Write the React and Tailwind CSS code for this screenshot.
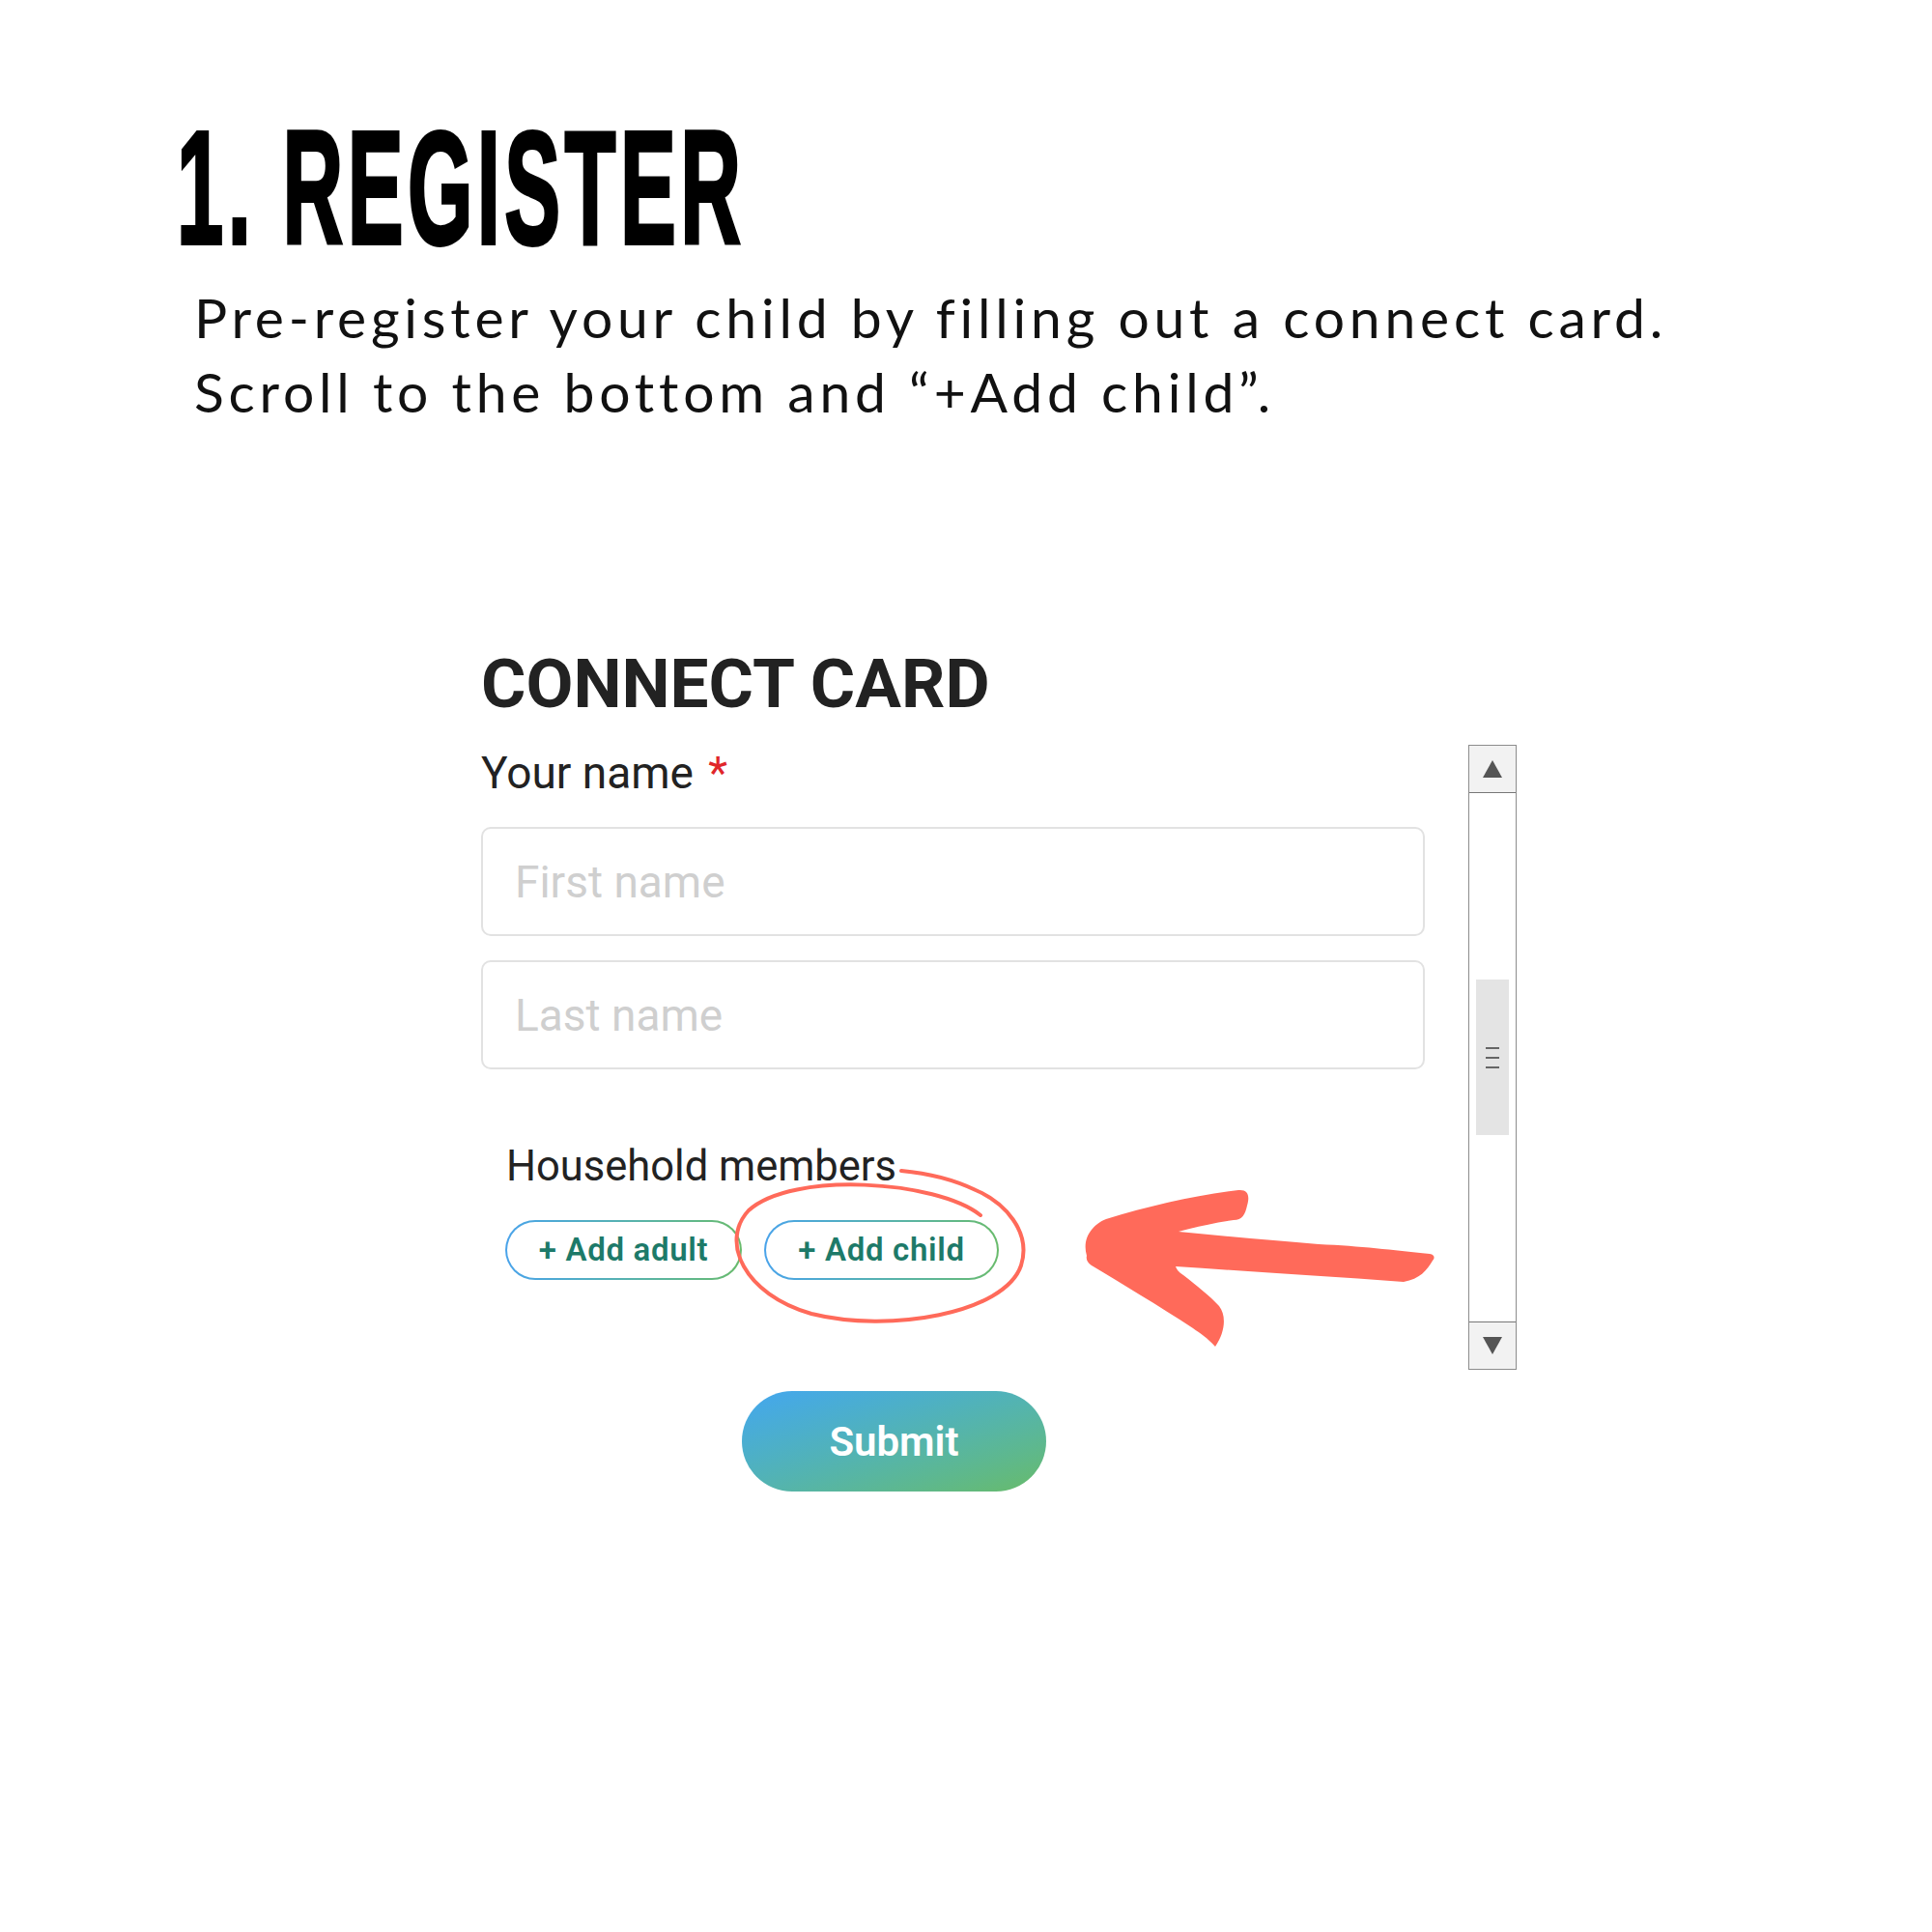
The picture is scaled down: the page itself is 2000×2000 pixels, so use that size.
import React from 'react';

const roboto = "font-['Roboto',sans-serif]";

// hand-drawn coral arrow pointing at the "+ Add child" button
const Arrow = () => (
  <svg className="absolute left-[1100px] top-[1210px] w-[400px] h-[200px]" viewBox="0 0 400 200">
    <path
      d="M25 90 C22 80 24 70 30 63 C34 58 38 55 45 52 C90 38 140 27 182 22 C192 21 194 28 191 38 C189 47 186 53 177 53 C155 56 135 61 120 65 C170 70 220 74 265 78 C310 80 340 84 380 88 C386 89 385 93 383 95 C377 105 370 114 353 117 C270 111 190 106 117 101 C118 104 120 107 125 110 C140 122 152 131 162 142 C170 152 168 170 158 184 C150 175 142 170 135 165 C100 142 60 118 30 100 C26 97 24 94 25 90 Z"
      fill="#ff6a5a"
    />
  </svg>
);

// scribbled loop around the child button
const Loop = () => (
  <svg className="absolute left-[740px] top-[1195px] w-[340px] h-[190px]" viewBox="740 1195 340 190">
    <path
      d="M1015 1258 C970 1222 820 1212 775 1253 C745 1285 770 1340 840 1360 C920 1380 1040 1360 1057 1310 C1068 1275 1040 1245 1010 1232 C985 1220 955 1214 933 1212"
      fill="none"
      stroke="#ff6a5a"
      strokeWidth="4"
      strokeLinecap="round"
    />
  </svg>
);

const GhostButton = ({ label, width }) => (
  <div className={`p-[2px] rounded-full bg-linear-to-r from-[#4aa3ea] to-[#69bb6b] ${width}`}>
    <div className={`h-[58px] rounded-full bg-white flex items-center justify-center text-[33px] font-semibold tracking-[0.02em] text-[#1d7a69] ${roboto}`}>
      {label}
    </div>
  </div>
);

const FakeScrollbar = () => (
  <div className="ml-[45px] w-[50px] h-[647px] border border-[#8c8c8c] flex flex-col bg-white">
    <div className="h-[49px] bg-[#f2f2f2] border-b border-[#777] flex items-center justify-center">
      <div className="w-0 h-0 border-l-[10px] border-r-[10px] border-b-[18px] border-l-transparent border-r-transparent border-b-[#555]" />
    </div>
    <div className="flex-1 pt-[193px] px-[7px]">
      <div className="h-[161px] bg-[#e4e4e4] flex flex-col items-center justify-center gap-[8px]">
        <div className="w-[14px] h-[2px] bg-[#666]" />
        <div className="w-[14px] h-[2px] bg-[#666]" />
        <div className="w-[14px] h-[2px] bg-[#666]" />
      </div>
    </div>
    <div className="h-[49px] bg-[#f2f2f2] border-t border-[#777] flex items-center justify-center">
      <div className="w-0 h-0 border-l-[10px] border-r-[10px] border-t-[18px] border-l-transparent border-r-transparent border-t-[#555]" />
    </div>
  </div>
);

export default function App() {
  return (
    <div className="relative w-[2000px] h-[2000px] bg-white overflow-hidden">
      {/* Header */}
      <div className="pl-[183px] pt-[111px]">
        <h1 className="font-['Liberation_Sans',sans-serif] font-bold text-[167px] leading-none tracking-[0.05em] text-black whitespace-nowrap origin-left scale-x-[0.52] [-webkit-text-stroke:4px_black]">
          1. REGISTER
        </h1>
        <p className="mt-[12px] pl-[18px] font-['Lato',sans-serif] text-[57px] leading-[77px] tracking-[0.084em] text-[#111] whitespace-nowrap">
          Pre-register your child by filling out a connect card.
          <br />
          Scroll to the bottom and “+Add child”.
        </p>
      </div>

      {/* Connect card */}
      <div className="ml-[498px] mt-[228px]">
        <h2 className={`${roboto} font-bold text-[71px] leading-none text-[#222]`}>CONNECT CARD</h2>

        <div className="mt-[28px] flex items-start">
          <div className="w-[977px] flex flex-col">
            <label className={`mt-[6px] ${roboto} text-[46px] leading-none text-[#222]`}>
              Your name <span className="ml-[4px] text-[#e0262a]">*</span>
            </label>
            <input
              className={`mt-[33px] h-[113px] border-2 border-[#e2e2e2] rounded-[10px] pl-[33px] ${roboto} text-[46px] text-[#222] placeholder:text-[#cfcfcf] outline-none`}
              placeholder="First name"
            />
            <input
              className={`mt-[25px] h-[113px] border-2 border-[#e2e2e2] rounded-[10px] pl-[33px] ${roboto} text-[46px] text-[#222] placeholder:text-[#cfcfcf] outline-none`}
              placeholder="Last name"
            />
            <div className={`mt-[79px] pl-[26px] ${roboto} text-[43.5px] leading-none text-[#222]`}>Household members</div>
            <div className="mt-[33px] pl-[25px] flex gap-[23px]">
              <GhostButton label="+ Add adult" width="w-[245px]" />
              <GhostButton label="+ Add child" width="w-[243px]" />
            </div>
          </div>
          <FakeScrollbar />
        </div>

        <button
          className={`mt-[22px] ml-[270px] w-[315px] h-[104px] rounded-full bg-linear-to-br from-[#44a6f0] to-[#68bb68] text-white text-[42px] font-semibold ${roboto}`}
        >
          Submit
        </button>
      </div>

      <Loop />
      <Arrow />
    </div>
  );
}
